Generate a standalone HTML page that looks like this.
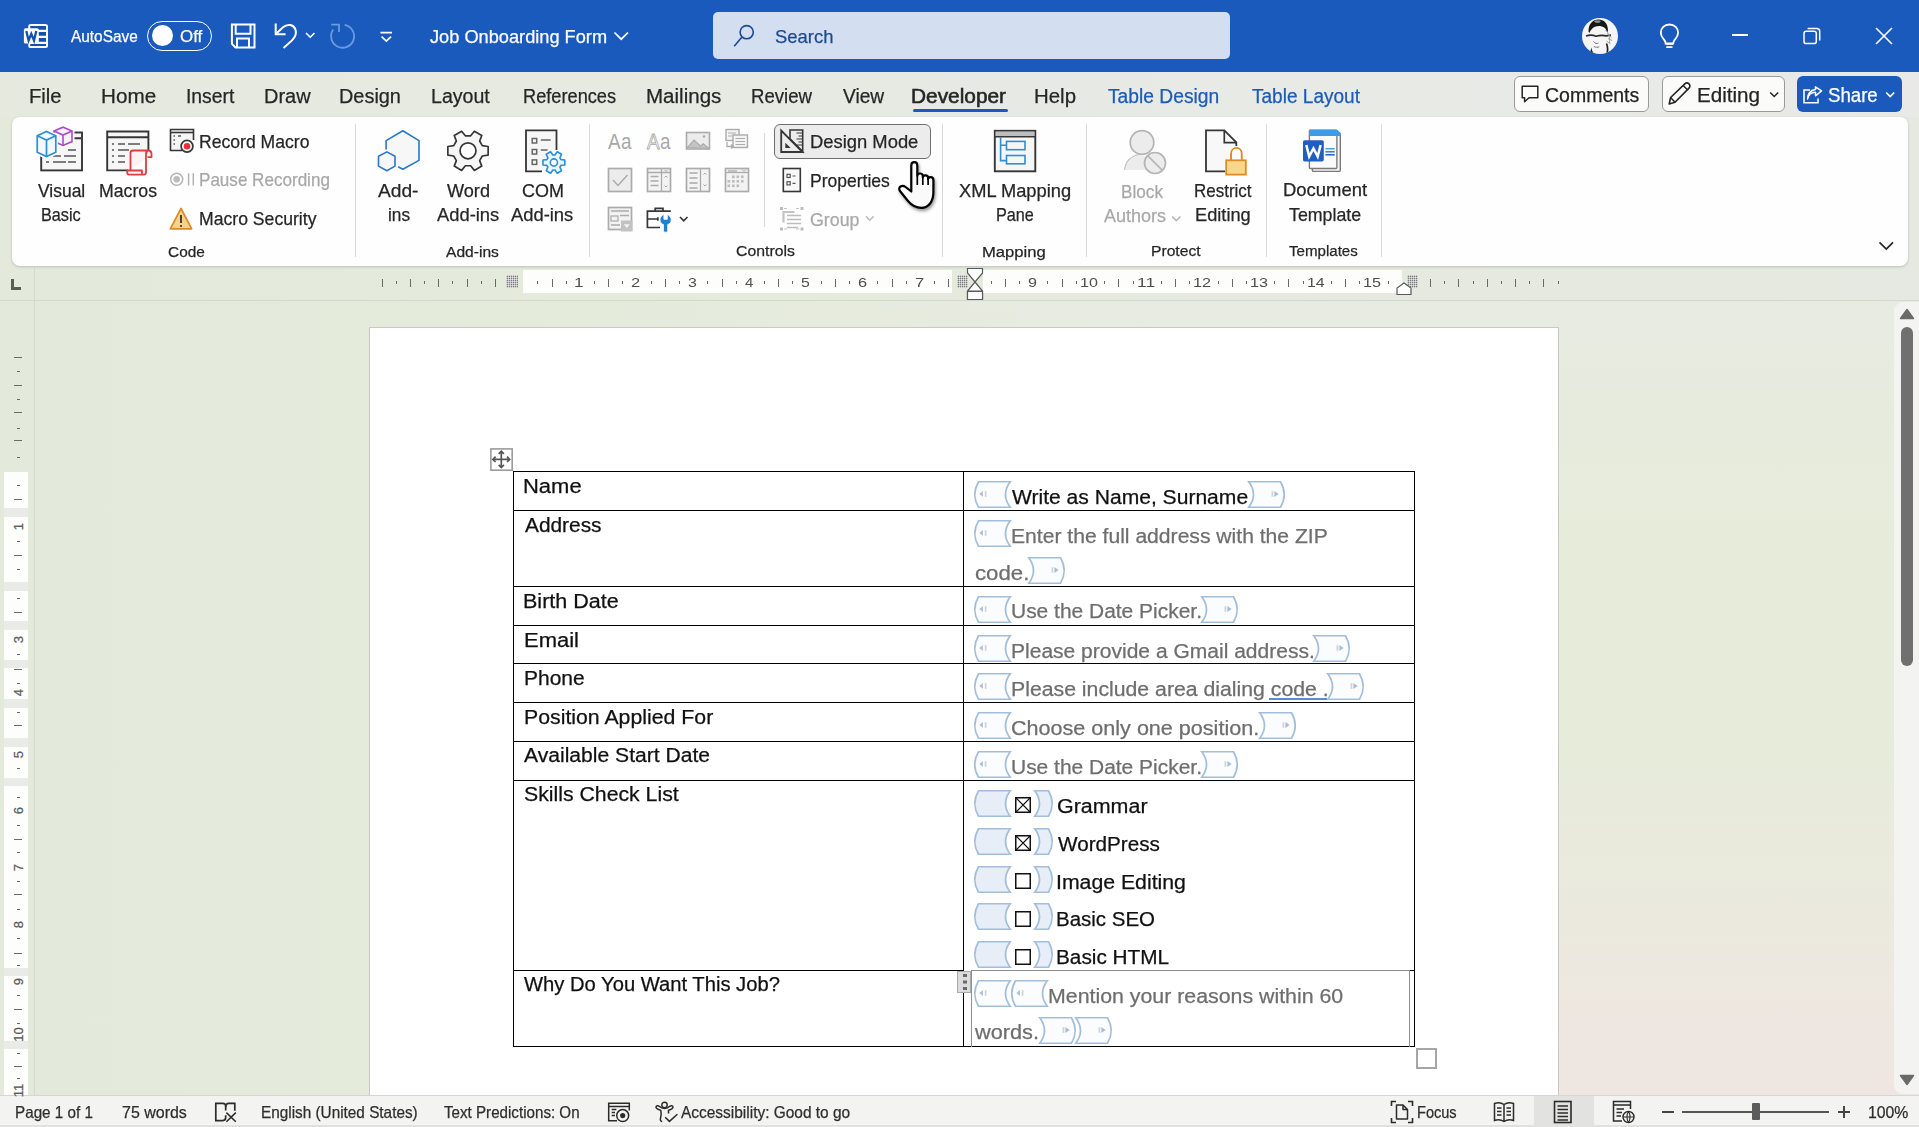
<!DOCTYPE html>
<html><head><meta charset="utf-8"><style>
html,body{margin:0;padding:0}
body{width:1919px;height:1127px;overflow:hidden;position:relative;font-family:"Liberation Sans",sans-serif;background:#e6e9df}
.t{position:absolute;white-space:nowrap;line-height:1;transform-origin:0 0;-webkit-text-stroke:0.25px currentColor}
svg{overflow:visible}
</style></head><body>
<div style="position:absolute;left:0px;top:0px;width:1919px;height:72px;background:#1b5abd"></div>
<div style="position:absolute;left:0px;top:72px;width:1919px;height:45px;background:linear-gradient(90deg,#e5e9de 0%,#e6eae2 40%,#e8eae6 70%,#e9eae8 100%)"></div>
<div style="position:absolute;left:0px;top:117px;width:1919px;height:185px;background:linear-gradient(90deg,#e3eadb 0%,#e4eadc 40%,#e6e9e1 100%)"></div>
<div style="position:absolute;left:0px;top:302px;width:1919px;height:793px;background:linear-gradient(90deg,#e3eadb 0%,#e4ebdb 30%,rgba(0,0,0,0) 60%),linear-gradient(180deg,#e8ebe2 0%,#e7ecda 30%,#e7ecda 55%,#eaeadd 72%,#ede8e0 86%,#efe6e2 100%)"></div>
<div class="t" style="left:70.92px;top:27.85px;font-size:17px;color:#ffffff;transform:scaleX(0.9060);">AutoSave</div>
<div style="position:absolute;left:147px;top:21px;width:65px;height:30px;box-sizing:border-box;border:1.5px solid #fff;border-radius:15px"></div>
<div style="position:absolute;left:152px;top:25px;width:21px;height:21px;background:#fff;border-radius:50%"></div>
<div class="t" style="left:180.24px;top:27.85px;font-size:17px;color:#ffffff;transform:scaleX(0.9965);">Off</div>
<div class="t" style="left:429.73px;top:26.85px;font-size:19px;color:#ffffff;transform:scaleX(0.9582);">Job Onboarding Form</div>
<div style="position:absolute;left:713px;top:12px;width:517px;height:47px;background:#d3def0;border-radius:5px"></div>
<div class="t" style="left:774.87px;top:27.45px;font-size:19px;color:#1d4a91;transform:scaleX(0.9699);">Search</div>
<div class="t" style="left:29.38px;top:86.00px;font-size:20px;color:#262626;transform:scaleX(1.0101);">File</div>
<div class="t" style="left:100.85px;top:86.00px;font-size:20px;color:#262626;transform:scaleX(1.0335);">Home</div>
<div class="t" style="left:185.76px;top:86.00px;font-size:20px;color:#262626;transform:scaleX(0.9667);">Insert</div>
<div class="t" style="left:264.40px;top:86.00px;font-size:20px;color:#262626;transform:scaleX(0.9978);">Draw</div>
<div class="t" style="left:339.41px;top:86.00px;font-size:20px;color:#262626;transform:scaleX(0.9949);">Design</div>
<div class="t" style="left:430.63px;top:86.00px;font-size:20px;color:#262626;transform:scaleX(0.9794);">Layout</div>
<div class="t" style="left:522.54px;top:86.00px;font-size:20px;color:#262626;transform:scaleX(0.9100);">References</div>
<div class="t" style="left:645.86px;top:86.00px;font-size:20px;color:#262626;transform:scaleX(1.0267);">Mailings</div>
<div class="t" style="left:751.01px;top:86.00px;font-size:20px;color:#262626;transform:scaleX(0.9297);">Review</div>
<div class="t" style="left:842.90px;top:86.00px;font-size:20px;color:#262626;transform:scaleX(0.9557);">View</div>
<div class="t" style="left:1033.87px;top:86.00px;font-size:20px;color:#262626;transform:scaleX(1.0207);">Help</div>
<div class="t" style="left:911.33px;top:86.00px;font-size:20px;color:#262626;transform:scaleX(1.0426);-webkit-text-stroke:0.55px #262626;">Developer</div>
<div style="position:absolute;left:913px;top:108.5px;width:95px;height:3.5px;background:#1b5abd;border-radius:2px"></div>
<div class="t" style="left:1107.62px;top:86.00px;font-size:20px;color:#1c5bb8;transform:scaleX(0.9614);">Table Design</div>
<div class="t" style="left:1252.12px;top:86.00px;font-size:20px;color:#1c5bb8;transform:scaleX(0.9522);">Table Layout</div>
<div style="position:absolute;left:1514px;top:76px;width:135px;height:36px;box-sizing:border-box;background:#fbfbfa;border:1px solid #9a9a9a;border-radius:6px"></div>
<div class="t" style="left:1545.03px;top:84.70px;font-size:20px;color:#242424;transform:scaleX(0.9747);">Comments</div>
<div style="position:absolute;left:1661.5px;top:76px;width:123px;height:36px;box-sizing:border-box;background:#fbfbfa;border:1px solid #9a9a9a;border-radius:6px"></div>
<div class="t" style="left:1697.05px;top:84.70px;font-size:20px;color:#242424;transform:scaleX(1.0309);">Editing</div>
<div style="position:absolute;left:1797px;top:76px;width:105px;height:36px;background:#1b5abd;border-radius:6px"></div>
<div class="t" style="left:1827.76px;top:84.70px;font-size:20px;color:#ffffff;transform:scaleX(0.9320);">Share</div>
<div style="position:absolute;left:12px;top:117px;width:1896px;height:149px;background:#fefefe;border-radius:8px;box-shadow:0 1px 3px rgba(0,0,0,0.18)"></div>
<div style="position:absolute;left:355px;top:124px;width:1px;height:133px;background:#d9d9d9"></div>
<div style="position:absolute;left:589px;top:124px;width:1px;height:133px;background:#d9d9d9"></div>
<div style="position:absolute;left:942px;top:124px;width:1px;height:133px;background:#d9d9d9"></div>
<div style="position:absolute;left:1086px;top:124px;width:1px;height:133px;background:#d9d9d9"></div>
<div style="position:absolute;left:1266px;top:124px;width:1px;height:133px;background:#d9d9d9"></div>
<div style="position:absolute;left:1381px;top:124px;width:1px;height:133px;background:#d9d9d9"></div>
<div style="position:absolute;left:764px;top:133px;width:1px;height:94px;background:#d9d9d9"></div>
<div class="t" style="left:37.91px;top:181.97px;font-size:18.5px;color:#262626;transform:scaleX(0.9436);">Visual</div>
<div class="t" style="left:40.70px;top:206.08px;font-size:18.5px;color:#262626;transform:scaleX(0.8778);">Basic</div>
<div class="t" style="left:98.58px;top:181.97px;font-size:18.5px;color:#262626;transform:scaleX(0.9564);">Macros</div>
<div class="t" style="left:199.19px;top:133.08px;font-size:18.5px;color:#262626;transform:scaleX(0.9512);">Record Macro</div>
<div class="t" style="left:199.23px;top:170.78px;font-size:18.5px;color:#a8a8a8;transform:scaleX(0.9223);">Pause Recording</div>
<div class="t" style="left:199.19px;top:210.28px;font-size:18.5px;color:#262626;transform:scaleX(0.9522);">Macro Security</div>
<div class="t" style="left:167.63px;top:243.62px;font-size:15.5px;color:#262626;transform:scaleX(0.9952);">Code</div>
<div class="t" style="left:378.30px;top:182.08px;font-size:18.5px;color:#262626;transform:scaleX(1.0366);">Add-</div>
<div class="t" style="left:387.58px;top:206.28px;font-size:18.5px;color:#262626;transform:scaleX(0.9299);">ins</div>
<div class="t" style="left:446.91px;top:182.08px;font-size:18.5px;color:#262626;transform:scaleX(0.9800);">Word</div>
<div class="t" style="left:437.41px;top:206.28px;font-size:18.5px;color:#262626;transform:scaleX(0.9923);">Add-ins</div>
<div class="t" style="left:521.60px;top:182.08px;font-size:18.5px;color:#262626;transform:scaleX(0.9705);">COM</div>
<div class="t" style="left:511.41px;top:206.28px;font-size:18.5px;color:#262626;transform:scaleX(0.9923);">Add-ins</div>
<div class="t" style="left:445.72px;top:243.52px;font-size:15.5px;color:#262626;transform:scaleX(1.0053);">Add-ins</div>
<div style="position:absolute;left:774px;top:123.5px;width:157px;height:35px;box-sizing:border-box;background:#ececec;border:1px solid #6e6e6e;border-radius:6px"></div>
<div class="t" style="left:809.53px;top:132.97px;font-size:18.5px;color:#262626;transform:scaleX(0.9939);">Design Mode</div>
<div class="t" style="left:809.60px;top:171.68px;font-size:18.5px;color:#262626;transform:scaleX(0.9473);">Properties</div>
<div class="t" style="left:810.11px;top:210.88px;font-size:18.5px;color:#a8a8a8;transform:scaleX(0.9625);">Group</div>
<div class="t" style="left:735.61px;top:243.32px;font-size:15.5px;color:#262626;transform:scaleX(1.0209);">Controls</div>
<div class="t" style="left:958.84px;top:182.18px;font-size:18.5px;color:#262626;transform:scaleX(0.9880);">XML Mapping</div>
<div class="t" style="left:995.70px;top:205.78px;font-size:18.5px;color:#262626;transform:scaleX(0.8756);">Pane</div>
<div class="t" style="left:982.37px;top:243.62px;font-size:15.5px;color:#262626;transform:scaleX(1.0718);">Mapping</div>
<div class="t" style="left:1121.03px;top:183.28px;font-size:18.5px;color:#a8a8a8;transform:scaleX(0.9279);">Block</div>
<div class="t" style="left:1103.91px;top:207.28px;font-size:18.5px;color:#a8a8a8;transform:scaleX(0.9731);">Authors</div>
<svg style="position:absolute;left:1171px;top:215px;" width="11" height="8" viewBox="0 0 11 8" fill="none"><path d="M1.2 1.5L5.3 5.6L9.4 1.5" stroke="#b5b5b5" stroke-width="1.5"/></svg>
<div class="t" style="left:1193.64px;top:181.78px;font-size:18.5px;color:#262626;transform:scaleX(0.9173);">Restrict</div>
<div class="t" style="left:1194.54px;top:205.78px;font-size:18.5px;color:#262626;transform:scaleX(0.9845);">Editing</div>
<div class="t" style="left:1150.55px;top:243.32px;font-size:15.5px;color:#262626;transform:scaleX(1.0096);">Protect</div>
<div class="t" style="left:1282.53px;top:181.28px;font-size:18.5px;color:#262626;transform:scaleX(0.9964);">Document</div>
<div class="t" style="left:1288.64px;top:205.78px;font-size:18.5px;color:#262626;transform:scaleX(0.9619);">Template</div>
<div class="t" style="left:1288.70px;top:243.32px;font-size:15.5px;color:#262626;transform:scaleX(0.9738);">Templates</div>
<div style="position:absolute;left:34px;top:267px;width:1px;height:828px;background:#d4d8cf"></div>
<div style="position:absolute;left:0px;top:300px;width:1919px;height:1px;background:#d4d8cf"></div>
<div style="position:absolute;left:523px;top:270px;width:429px;height:23px;background:#fdfdfb"></div>
<div style="position:absolute;left:983px;top:270px;width:419px;height:23px;background:#fdfdfb"></div>
<div class="t" style="left:574.04px;top:275.95px;font-size:13px;color:#4f4f4f;transform:scaleX(1.3263);-webkit-text-stroke:0;">1</div>
<div class="t" style="left:631.19px;top:275.95px;font-size:13px;color:#4f4f4f;transform:scaleX(1.2680);-webkit-text-stroke:0;">2</div>
<div class="t" style="left:688.05px;top:275.95px;font-size:13px;color:#4f4f4f;transform:scaleX(1.2275);-webkit-text-stroke:0;">3</div>
<div class="t" style="left:745.00px;top:275.95px;font-size:13px;color:#4f4f4f;transform:scaleX(1.1538);-webkit-text-stroke:0;">4</div>
<div class="t" style="left:801.42px;top:275.95px;font-size:13px;color:#4f4f4f;transform:scaleX(1.2146);-webkit-text-stroke:0;">5</div>
<div class="t" style="left:857.91px;top:275.95px;font-size:13px;color:#4f4f4f;transform:scaleX(1.2542);-webkit-text-stroke:0;">6</div>
<div class="t" style="left:914.59px;top:275.95px;font-size:13px;color:#4f4f4f;transform:scaleX(1.2680);-webkit-text-stroke:0;">7</div>
<div class="t" style="left:1028.04px;top:275.95px;font-size:13px;color:#4f4f4f;transform:scaleX(1.2407);-webkit-text-stroke:0;">9</div>
<div class="t" style="left:1079.99px;top:275.95px;font-size:13px;color:#4f4f4f;transform:scaleX(1.2370);-webkit-text-stroke:0;">10</div>
<div class="t" style="left:1136.57px;top:275.95px;font-size:13px;color:#4f4f4f;transform:scaleX(1.3451);-webkit-text-stroke:0;">11</div>
<div class="t" style="left:1193.34px;top:275.95px;font-size:13px;color:#4f4f4f;transform:scaleX(1.2495);-webkit-text-stroke:0;">12</div>
<div class="t" style="left:1250.03px;top:275.95px;font-size:13px;color:#4f4f4f;transform:scaleX(1.2432);-webkit-text-stroke:0;">13</div>
<div class="t" style="left:1306.73px;top:275.95px;font-size:13px;color:#4f4f4f;transform:scaleX(1.2246);-webkit-text-stroke:0;">14</div>
<div class="t" style="left:1363.39px;top:275.95px;font-size:13px;color:#4f4f4f;transform:scaleX(1.2370);-webkit-text-stroke:0;">15</div>
<div style="position:absolute;left:369px;top:327px;width:1190px;height:768px;background:#ffffff;box-sizing:border-box;border:1px solid #c8c8c8;border-bottom:none"></div>
<div style="position:absolute;left:0px;top:1095px;width:1919px;height:32px;background:#f3f3f2;border-top:1px solid #d6d6d6;box-sizing:border-box"></div>
<div style="position:absolute;left:0px;top:1125px;width:1919px;height:2px;background:#e1e1e0"></div>
<div class="t" style="left:14.78px;top:1103.97px;font-size:16.5px;color:#2e2e2e;transform:scaleX(0.9231);">Page 1 of 1</div>
<div class="t" style="left:121.70px;top:1103.97px;font-size:16.5px;color:#2e2e2e;transform:scaleX(0.9682);">75 words</div>
<div class="t" style="left:261.27px;top:1103.97px;font-size:16.5px;color:#2e2e2e;transform:scaleX(0.9285);">English (United States)</div>
<div class="t" style="left:444.20px;top:1103.97px;font-size:16.5px;color:#2e2e2e;transform:scaleX(0.9183);">Text Predictions: On</div>
<div class="t" style="left:680.92px;top:1103.97px;font-size:16.5px;color:#2e2e2e;transform:scaleX(0.9365);">Accessibility: Good to go</div>
<div class="t" style="left:1416.84px;top:1103.97px;font-size:16.5px;color:#2e2e2e;transform:scaleX(0.8824);">Focus</div>
<div style="position:absolute;left:1534px;top:1096px;width:60px;height:31px;background:#e2e2e0"></div>
<div class="t" style="left:1867.62px;top:1103.97px;font-size:16.5px;color:#2e2e2e;transform:scaleX(0.9573);">100%</div>
<div style="position:absolute;left:382px;top:279px;width:1px;height:8px;background:#6a6a6a"></div>
<div style="position:absolute;left:396px;top:281px;width:1px;height:3px;background:#6a6a6a"></div>
<div style="position:absolute;left:410px;top:279px;width:1px;height:8px;background:#6a6a6a"></div>
<div style="position:absolute;left:424px;top:281px;width:1px;height:3px;background:#6a6a6a"></div>
<div style="position:absolute;left:438px;top:279px;width:1px;height:8px;background:#6a6a6a"></div>
<div style="position:absolute;left:452px;top:281px;width:1px;height:3px;background:#6a6a6a"></div>
<div style="position:absolute;left:467px;top:279px;width:1px;height:8px;background:#6a6a6a"></div>
<div style="position:absolute;left:481px;top:281px;width:1px;height:3px;background:#6a6a6a"></div>
<div style="position:absolute;left:495px;top:279px;width:1px;height:8px;background:#6a6a6a"></div>
<div style="position:absolute;left:537px;top:281px;width:1px;height:3px;background:#6a6a6a"></div>
<div style="position:absolute;left:552px;top:279px;width:1px;height:8px;background:#6a6a6a"></div>
<div style="position:absolute;left:566px;top:281px;width:1px;height:3px;background:#6a6a6a"></div>
<div style="position:absolute;left:594px;top:281px;width:1px;height:3px;background:#6a6a6a"></div>
<div style="position:absolute;left:608px;top:279px;width:1px;height:8px;background:#6a6a6a"></div>
<div style="position:absolute;left:622px;top:281px;width:1px;height:3px;background:#6a6a6a"></div>
<div style="position:absolute;left:651px;top:281px;width:1px;height:3px;background:#6a6a6a"></div>
<div style="position:absolute;left:665px;top:279px;width:1px;height:8px;background:#6a6a6a"></div>
<div style="position:absolute;left:679px;top:281px;width:1px;height:3px;background:#6a6a6a"></div>
<div style="position:absolute;left:707px;top:281px;width:1px;height:3px;background:#6a6a6a"></div>
<div style="position:absolute;left:722px;top:279px;width:1px;height:8px;background:#6a6a6a"></div>
<div style="position:absolute;left:736px;top:281px;width:1px;height:3px;background:#6a6a6a"></div>
<div style="position:absolute;left:764px;top:281px;width:1px;height:3px;background:#6a6a6a"></div>
<div style="position:absolute;left:778px;top:279px;width:1px;height:8px;background:#6a6a6a"></div>
<div style="position:absolute;left:792px;top:281px;width:1px;height:3px;background:#6a6a6a"></div>
<div style="position:absolute;left:821px;top:281px;width:1px;height:3px;background:#6a6a6a"></div>
<div style="position:absolute;left:835px;top:279px;width:1px;height:8px;background:#6a6a6a"></div>
<div style="position:absolute;left:849px;top:281px;width:1px;height:3px;background:#6a6a6a"></div>
<div style="position:absolute;left:877px;top:281px;width:1px;height:3px;background:#6a6a6a"></div>
<div style="position:absolute;left:892px;top:279px;width:1px;height:8px;background:#6a6a6a"></div>
<div style="position:absolute;left:906px;top:281px;width:1px;height:3px;background:#6a6a6a"></div>
<div style="position:absolute;left:934px;top:281px;width:1px;height:3px;background:#6a6a6a"></div>
<div style="position:absolute;left:948px;top:279px;width:1px;height:8px;background:#6a6a6a"></div>
<div style="position:absolute;left:991px;top:281px;width:1px;height:3px;background:#6a6a6a"></div>
<div style="position:absolute;left:1005px;top:279px;width:1px;height:8px;background:#6a6a6a"></div>
<div style="position:absolute;left:1019px;top:281px;width:1px;height:3px;background:#6a6a6a"></div>
<div style="position:absolute;left:1047px;top:281px;width:1px;height:3px;background:#6a6a6a"></div>
<div style="position:absolute;left:1062px;top:279px;width:1px;height:8px;background:#6a6a6a"></div>
<div style="position:absolute;left:1076px;top:281px;width:1px;height:3px;background:#6a6a6a"></div>
<div style="position:absolute;left:1104px;top:281px;width:1px;height:3px;background:#6a6a6a"></div>
<div style="position:absolute;left:1118px;top:279px;width:1px;height:8px;background:#6a6a6a"></div>
<div style="position:absolute;left:1133px;top:281px;width:1px;height:3px;background:#6a6a6a"></div>
<div style="position:absolute;left:1161px;top:281px;width:1px;height:3px;background:#6a6a6a"></div>
<div style="position:absolute;left:1175px;top:279px;width:1px;height:8px;background:#6a6a6a"></div>
<div style="position:absolute;left:1189px;top:281px;width:1px;height:3px;background:#6a6a6a"></div>
<div style="position:absolute;left:1218px;top:281px;width:1px;height:3px;background:#6a6a6a"></div>
<div style="position:absolute;left:1232px;top:279px;width:1px;height:8px;background:#6a6a6a"></div>
<div style="position:absolute;left:1246px;top:281px;width:1px;height:3px;background:#6a6a6a"></div>
<div style="position:absolute;left:1274px;top:281px;width:1px;height:3px;background:#6a6a6a"></div>
<div style="position:absolute;left:1288px;top:279px;width:1px;height:8px;background:#6a6a6a"></div>
<div style="position:absolute;left:1303px;top:281px;width:1px;height:3px;background:#6a6a6a"></div>
<div style="position:absolute;left:1331px;top:281px;width:1px;height:3px;background:#6a6a6a"></div>
<div style="position:absolute;left:1345px;top:279px;width:1px;height:8px;background:#6a6a6a"></div>
<div style="position:absolute;left:1359px;top:281px;width:1px;height:3px;background:#6a6a6a"></div>
<div style="position:absolute;left:1388px;top:281px;width:1px;height:3px;background:#6a6a6a"></div>
<div style="position:absolute;left:1430px;top:279px;width:1px;height:8px;background:#6a6a6a"></div>
<div style="position:absolute;left:1444px;top:281px;width:1px;height:3px;background:#6a6a6a"></div>
<div style="position:absolute;left:1458px;top:279px;width:1px;height:8px;background:#6a6a6a"></div>
<div style="position:absolute;left:1473px;top:281px;width:1px;height:3px;background:#6a6a6a"></div>
<div style="position:absolute;left:1487px;top:279px;width:1px;height:8px;background:#6a6a6a"></div>
<div style="position:absolute;left:1501px;top:281px;width:1px;height:3px;background:#6a6a6a"></div>
<div style="position:absolute;left:1515px;top:279px;width:1px;height:8px;background:#6a6a6a"></div>
<div style="position:absolute;left:1529px;top:281px;width:1px;height:3px;background:#6a6a6a"></div>
<div style="position:absolute;left:1543px;top:279px;width:1px;height:8px;background:#6a6a6a"></div>
<div style="position:absolute;left:1558px;top:281px;width:1px;height:3px;background:#6a6a6a"></div>
<div style="position:absolute;left:506px;top:275px;width:12px;height:13px;background:repeating-linear-gradient(90deg,rgba(255,255,255,.55) 0 1px,transparent 1px 2px),repeating-linear-gradient(0deg,rgba(255,255,255,.55) 0 1px,transparent 1px 2px),#7a7a7a"></div>
<div style="position:absolute;left:957px;top:275px;width:11px;height:13px;background:repeating-linear-gradient(90deg,rgba(255,255,255,.55) 0 1px,transparent 1px 2px),repeating-linear-gradient(0deg,rgba(255,255,255,.55) 0 1px,transparent 1px 2px),#7a7a7a"></div>
<div style="position:absolute;left:1407px;top:275px;width:11px;height:13px;background:repeating-linear-gradient(90deg,rgba(255,255,255,.55) 0 1px,transparent 1px 2px),repeating-linear-gradient(0deg,rgba(255,255,255,.55) 0 1px,transparent 1px 2px),#7a7a7a"></div>
<svg style="position:absolute;left:966px;top:267px;" width="18" height="34" viewBox="0 0 18 34" fill="none"><path d="M1.5 1.5H16.5V6L9 15L1.5 6Z M9 15L16.5 24V32.5H1.5V24Z M1.5 24H16.5" stroke="#5a5a5a" stroke-width="1.2" fill="#fff"/><path d="M1.5 24.5H16.5V32.5H1.5Z" fill="#fff" stroke="#5a5a5a" stroke-width="1.2"/></svg>
<svg style="position:absolute;left:1396px;top:282px;" width="16" height="13" viewBox="0 0 16 13" fill="none"><path d="M1 12.5V6L8 1L15 6V12.5Z" fill="#fff" stroke="#5a5a5a" stroke-width="1.2"/></svg>
<svg style="position:absolute;left:11px;top:279px;" width="11" height="11" viewBox="0 0 11 11" fill="none"><path d="M1.5 0V9.5H10" stroke="#585e56" stroke-width="3"/></svg>
<div style="position:absolute;left:4px;top:472px;width:24px;height:623px;background:#fdfdfb"></div>
<div style="position:absolute;left:4px;top:508px;width:24px;height:9px;background:#e9ebe6"></div>
<div style="position:absolute;left:4px;top:582px;width:24px;height:9px;background:#e9ebe6"></div>
<div style="position:absolute;left:4px;top:621px;width:24px;height:9px;background:#e9ebe6"></div>
<div style="position:absolute;left:4px;top:660px;width:24px;height:8px;background:#e9ebe6"></div>
<div style="position:absolute;left:4px;top:699px;width:24px;height:9px;background:#e9ebe6"></div>
<div style="position:absolute;left:4px;top:738px;width:24px;height:9px;background:#e9ebe6"></div>
<div style="position:absolute;left:4px;top:778px;width:24px;height:8px;background:#e9ebe6"></div>
<div style="position:absolute;left:4px;top:968px;width:24px;height:8px;background:#e9ebe6"></div>
<div style="position:absolute;left:4px;top:1041px;width:24px;height:8px;background:#e9ebe6"></div>
<div style="position:absolute;left:14px;top:357px;width:8px;height:1px;background:#6a6a6a"></div>
<div style="position:absolute;left:14px;top:385px;width:8px;height:1px;background:#6a6a6a"></div>
<div style="position:absolute;left:14px;top:412px;width:8px;height:1px;background:#6a6a6a"></div>
<div style="position:absolute;left:14px;top:440px;width:8px;height:1px;background:#6a6a6a"></div>
<div style="position:absolute;left:14px;top:499px;width:8px;height:1px;background:#6a6a6a"></div>
<div style="position:absolute;left:14px;top:555px;width:8px;height:1px;background:#6a6a6a"></div>
<div style="position:absolute;left:14px;top:612px;width:8px;height:1px;background:#6a6a6a"></div>
<div style="position:absolute;left:14px;top:669px;width:8px;height:1px;background:#6a6a6a"></div>
<div style="position:absolute;left:14px;top:725px;width:8px;height:1px;background:#6a6a6a"></div>
<div style="position:absolute;left:14px;top:839px;width:8px;height:1px;background:#6a6a6a"></div>
<div style="position:absolute;left:14px;top:894px;width:8px;height:1px;background:#6a6a6a"></div>
<div style="position:absolute;left:14px;top:953px;width:8px;height:1px;background:#6a6a6a"></div>
<div style="position:absolute;left:14px;top:1009px;width:8px;height:1px;background:#6a6a6a"></div>
<div style="position:absolute;left:14px;top:1066px;width:8px;height:1px;background:#6a6a6a"></div>
<div style="position:absolute;left:17px;top:371px;width:3px;height:1px;background:#6a6a6a"></div>
<div style="position:absolute;left:17px;top:399px;width:3px;height:1px;background:#6a6a6a"></div>
<div style="position:absolute;left:17px;top:428px;width:3px;height:1px;background:#6a6a6a"></div>
<div style="position:absolute;left:17px;top:457px;width:3px;height:1px;background:#6a6a6a"></div>
<div style="position:absolute;left:17px;top:485px;width:3px;height:1px;background:#6a6a6a"></div>
<div style="position:absolute;left:17px;top:541px;width:3px;height:1px;background:#6a6a6a"></div>
<div style="position:absolute;left:17px;top:569px;width:3px;height:1px;background:#6a6a6a"></div>
<div style="position:absolute;left:17px;top:598px;width:3px;height:1px;background:#6a6a6a"></div>
<div style="position:absolute;left:17px;top:654px;width:3px;height:1px;background:#6a6a6a"></div>
<div style="position:absolute;left:17px;top:683px;width:3px;height:1px;background:#6a6a6a"></div>
<div style="position:absolute;left:17px;top:712px;width:3px;height:1px;background:#6a6a6a"></div>
<div style="position:absolute;left:17px;top:768px;width:3px;height:1px;background:#6a6a6a"></div>
<div style="position:absolute;left:17px;top:797px;width:3px;height:1px;background:#6a6a6a"></div>
<div style="position:absolute;left:17px;top:825px;width:3px;height:1px;background:#6a6a6a"></div>
<div style="position:absolute;left:17px;top:852px;width:3px;height:1px;background:#6a6a6a"></div>
<div style="position:absolute;left:17px;top:881px;width:3px;height:1px;background:#6a6a6a"></div>
<div style="position:absolute;left:17px;top:909px;width:3px;height:1px;background:#6a6a6a"></div>
<div style="position:absolute;left:17px;top:938px;width:3px;height:1px;background:#6a6a6a"></div>
<div style="position:absolute;left:17px;top:965px;width:3px;height:1px;background:#6a6a6a"></div>
<div style="position:absolute;left:17px;top:995px;width:3px;height:1px;background:#6a6a6a"></div>
<div style="position:absolute;left:17px;top:1023px;width:3px;height:1px;background:#6a6a6a"></div>
<div style="position:absolute;left:17px;top:1053px;width:3px;height:1px;background:#6a6a6a"></div>
<div style="position:absolute;left:17px;top:1078px;width:3px;height:1px;background:#6a6a6a"></div>
<div class="t" style="left:-2px;top:520.0px;width:40px;text-align:center;font-size:13px;color:#5b5b5b;transform:rotate(-90deg);transform-origin:20px 6.5px">1</div>
<div class="t" style="left:-2px;top:632.7px;width:40px;text-align:center;font-size:13px;color:#5b5b5b;transform:rotate(-90deg);transform-origin:20px 6.5px">3</div>
<div class="t" style="left:-2px;top:685.5px;width:40px;text-align:center;font-size:13px;color:#5b5b5b;transform:rotate(-90deg);transform-origin:20px 6.5px">4</div>
<div class="t" style="left:-2px;top:747.5px;width:40px;text-align:center;font-size:13px;color:#5b5b5b;transform:rotate(-90deg);transform-origin:20px 6.5px">5</div>
<div class="t" style="left:-2px;top:803.5px;width:40px;text-align:center;font-size:13px;color:#5b5b5b;transform:rotate(-90deg);transform-origin:20px 6.5px">6</div>
<div class="t" style="left:-2px;top:861.0px;width:40px;text-align:center;font-size:13px;color:#5b5b5b;transform:rotate(-90deg);transform-origin:20px 6.5px">7</div>
<div class="t" style="left:-2px;top:917.5px;width:40px;text-align:center;font-size:13px;color:#5b5b5b;transform:rotate(-90deg);transform-origin:20px 6.5px">8</div>
<div class="t" style="left:-2px;top:974.9px;width:40px;text-align:center;font-size:13px;color:#5b5b5b;transform:rotate(-90deg);transform-origin:20px 6.5px">9</div>
<div class="t" style="left:-2px;top:1028.1px;width:40px;text-align:center;font-size:13px;color:#5b5b5b;transform:rotate(-90deg);transform-origin:20px 6.5px">10</div>
<div class="t" style="left:-2px;top:1083.5px;width:40px;text-align:center;font-size:13px;color:#5b5b5b;transform:rotate(-90deg);transform-origin:20px 6.5px">11</div>
<div style="position:absolute;left:513px;top:471px;width:902px;height:1px;background:#000"></div>
<div style="position:absolute;left:513px;top:510px;width:902px;height:1px;background:#000"></div>
<div style="position:absolute;left:513px;top:586px;width:902px;height:1px;background:#000"></div>
<div style="position:absolute;left:513px;top:625px;width:902px;height:1px;background:#000"></div>
<div style="position:absolute;left:513px;top:663px;width:902px;height:1px;background:#000"></div>
<div style="position:absolute;left:513px;top:702px;width:902px;height:1px;background:#000"></div>
<div style="position:absolute;left:513px;top:741px;width:902px;height:1px;background:#000"></div>
<div style="position:absolute;left:513px;top:780px;width:902px;height:1px;background:#000"></div>
<div style="position:absolute;left:513px;top:970px;width:451px;height:1px;background:#000"></div>
<div style="position:absolute;left:1410px;top:970px;width:5px;height:1px;background:#000"></div>
<div style="position:absolute;left:513px;top:1046px;width:902px;height:1px;background:#000"></div>
<div style="position:absolute;left:513px;top:471px;width:1px;height:576px;background:#000"></div>
<div style="position:absolute;left:963px;top:471px;width:1px;height:576px;background:#000"></div>
<div style="position:absolute;left:1414px;top:471px;width:1px;height:576px;background:#000"></div>
<div style="position:absolute;left:971px;top:970px;width:439px;height:1px;background:#8f8f8f"></div>
<div style="position:absolute;left:971px;top:970px;width:1px;height:77px;background:#8f8f8f"></div>
<div style="position:absolute;left:1409px;top:970px;width:1px;height:77px;background:#8f8f8f"></div>
<div style="position:absolute;left:1416px;top:1048px;width:21px;height:21px;box-sizing:border-box;border:2px solid #a6a6a6;background:#fff"></div>
<svg style="position:absolute;left:490px;top:448px;" width="23" height="23" viewBox="0 0 23 23" fill="none"><rect x="0.9" y="0.9" width="21.3" height="21.3" fill="#fff" stroke="#9c9c9c" stroke-width="1.6"/><path d="M11.3 3.6V19.2M3.6 11.4H19M8.7 5.9L11.3 3.2L13.9 5.9M8.7 16.9L11.3 19.6L13.9 16.9M5.6 8.7L2.9 11.4L5.6 14M17 8.7L19.7 11.4L17 14" stroke="#555" stroke-width="1.7" stroke-linejoin="miter"/></svg>
<svg style="position:absolute;left:957px;top:971px;" width="14" height="22" viewBox="0 0 14 22" fill="none"><rect x="0.5" y="0.5" width="13" height="21" fill="#dcdcdc" stroke="#a9a9a9"/><rect x="6" y="3" width="4" height="3" fill="#6a6a6a"/><rect x="6" y="9.5" width="4" height="3" fill="#6a6a6a"/><rect x="6" y="16" width="4" height="3" fill="#6a6a6a"/></svg>
<div class="t" style="left:523.24px;top:475.90px;font-size:20px;color:#111111;transform:scaleX(1.0984);">Name</div>
<div class="t" style="left:524.50px;top:514.70px;font-size:20px;color:#111111;transform:scaleX(1.0427);">Address</div>
<div class="t" style="left:523.28px;top:590.60px;font-size:20px;color:#111111;transform:scaleX(1.0764);">Birth Date</div>
<div class="t" style="left:523.64px;top:630.00px;font-size:20px;color:#111111;transform:scaleX(1.0998);">Email</div>
<div class="t" style="left:523.72px;top:668.30px;font-size:20px;color:#111111;transform:scaleX(1.0488);">Phone</div>
<div class="t" style="left:523.70px;top:706.90px;font-size:20px;color:#111111;transform:scaleX(1.0637);">Position Applied For</div>
<div class="t" style="left:524.39px;top:745.40px;font-size:20px;color:#111111;transform:scaleX(1.0547);">Available Start Date</div>
<div class="t" style="left:523.54px;top:784.40px;font-size:20px;color:#111111;transform:scaleX(1.0623);">Skills Check List</div>
<div class="t" style="left:524.15px;top:974.25px;font-size:20px;color:#111111;transform:scaleX(1.0095);">Why Do You Want This Job?</div>
<svg style="position:absolute;left:973.7px;top:480.5px;" width="37" height="27" viewBox="0 0 37 27" fill="none"><path d="M4.5 0.75H36.25Q26.75 13.5 36.25 26.25H4.5Q-3 13.5 4.5 0.75Z" fill="#fbfcfe" stroke="#a3bedb" stroke-width="1.7"/><path d="M5.4 13L8.9 10.1V15.9Z" fill="#aebfd3"/><rect x="10.8" y="10.2" width="1.7" height="5.6" fill="#cfd2d6"/></svg>
<div class="t" style="left:1011.89px;top:486.75px;font-size:20px;color:#111111;transform:scaleX(1.0533);">Write as Name, Surname</div>
<svg style="position:absolute;left:1247.5px;top:480.5px;" width="37" height="27" viewBox="0 0 37 27" fill="none"><path d="M0.75 0.75H32.5Q40 13.5 32.5 26.25H0.75Q10.25 13.5 0.75 0.75Z" fill="#fbfcfe" stroke="#a3bedb" stroke-width="1.7"/><rect x="23.5" y="10.2" width="1.8" height="5.6" fill="#d2d4d8"/><path d="M26.4 10.1V15.9L30.6 13Z" fill="#a6bedb"/></svg>
<svg style="position:absolute;left:973.7px;top:519.5px;" width="37" height="27" viewBox="0 0 37 27" fill="none"><path d="M4.5 0.75H36.25Q26.75 13.5 36.25 26.25H4.5Q-3 13.5 4.5 0.75Z" fill="#fbfcfe" stroke="#a3bedb" stroke-width="1.7"/><path d="M5.4 13L8.9 10.1V15.9Z" fill="#aebfd3"/><rect x="10.8" y="10.2" width="1.7" height="5.6" fill="#cfd2d6"/></svg>
<div class="t" style="left:1010.81px;top:525.90px;font-size:20px;color:#6e6e6e;transform:scaleX(1.0555);">Enter the full address with the ZIP</div>
<div class="t" style="left:974.61px;top:562.90px;font-size:20px;color:#6e6e6e;transform:scaleX(1.1102);">code.</div>
<svg style="position:absolute;left:1027.5px;top:556.5px;" width="37" height="27" viewBox="0 0 37 27" fill="none"><path d="M0.75 0.75H32.5Q40 13.5 32.5 26.25H0.75Q10.25 13.5 0.75 0.75Z" fill="#fbfcfe" stroke="#a3bedb" stroke-width="1.7"/><rect x="23.5" y="10.2" width="1.8" height="5.6" fill="#d2d4d8"/><path d="M26.4 10.1V15.9L30.6 13Z" fill="#a6bedb"/></svg>
<svg style="position:absolute;left:973.7px;top:595.5px;" width="37" height="27" viewBox="0 0 37 27" fill="none"><path d="M4.5 0.75H36.25Q26.75 13.5 36.25 26.25H4.5Q-3 13.5 4.5 0.75Z" fill="#fbfcfe" stroke="#a3bedb" stroke-width="1.7"/><path d="M5.4 13L8.9 10.1V15.9Z" fill="#aebfd3"/><rect x="10.8" y="10.2" width="1.7" height="5.6" fill="#cfd2d6"/></svg>
<div class="t" style="left:1010.93px;top:601.40px;font-size:20px;color:#6e6e6e;transform:scaleX(1.0475);">Use the Date Picker.</div>
<svg style="position:absolute;left:1200.5px;top:595.5px;" width="37" height="27" viewBox="0 0 37 27" fill="none"><path d="M0.75 0.75H32.5Q40 13.5 32.5 26.25H0.75Q10.25 13.5 0.75 0.75Z" fill="#fbfcfe" stroke="#a3bedb" stroke-width="1.7"/><rect x="23.5" y="10.2" width="1.8" height="5.6" fill="#d2d4d8"/><path d="M26.4 10.1V15.9L30.6 13Z" fill="#a6bedb"/></svg>
<svg style="position:absolute;left:973.7px;top:634.5px;" width="37" height="27" viewBox="0 0 37 27" fill="none"><path d="M4.5 0.75H36.25Q26.75 13.5 36.25 26.25H4.5Q-3 13.5 4.5 0.75Z" fill="#fbfcfe" stroke="#a3bedb" stroke-width="1.7"/><path d="M5.4 13L8.9 10.1V15.9Z" fill="#aebfd3"/><rect x="10.8" y="10.2" width="1.7" height="5.6" fill="#cfd2d6"/></svg>
<div class="t" style="left:1010.82px;top:640.50px;font-size:20px;color:#6e6e6e;transform:scaleX(1.0511);">Please provide a Gmail address.</div>
<svg style="position:absolute;left:1313px;top:634.5px;" width="37" height="27" viewBox="0 0 37 27" fill="none"><path d="M0.75 0.75H32.5Q40 13.5 32.5 26.25H0.75Q10.25 13.5 0.75 0.75Z" fill="#fbfcfe" stroke="#a3bedb" stroke-width="1.7"/><rect x="23.5" y="10.2" width="1.8" height="5.6" fill="#d2d4d8"/><path d="M26.4 10.1V15.9L30.6 13Z" fill="#a6bedb"/></svg>
<svg style="position:absolute;left:973.7px;top:672.5px;" width="37" height="27" viewBox="0 0 37 27" fill="none"><path d="M4.5 0.75H36.25Q26.75 13.5 36.25 26.25H4.5Q-3 13.5 4.5 0.75Z" fill="#fbfcfe" stroke="#a3bedb" stroke-width="1.7"/><path d="M5.4 13L8.9 10.1V15.9Z" fill="#aebfd3"/><rect x="10.8" y="10.2" width="1.7" height="5.6" fill="#cfd2d6"/></svg>
<div class="t" style="left:1010.80px;top:678.80px;font-size:20px;color:#6e6e6e;transform:scaleX(1.0622);">Please include area dialing code .</div>
<svg style="position:absolute;left:1327px;top:672.5px;" width="37" height="27" viewBox="0 0 37 27" fill="none"><path d="M0.75 0.75H32.5Q40 13.5 32.5 26.25H0.75Q10.25 13.5 0.75 0.75Z" fill="#fbfcfe" stroke="#a3bedb" stroke-width="1.7"/><rect x="23.5" y="10.2" width="1.8" height="5.6" fill="#d2d4d8"/><path d="M26.4 10.1V15.9L30.6 13Z" fill="#a6bedb"/></svg>
<div style="position:absolute;left:1269px;top:698px;width:58px;height:2px;background:#5f8bc9"></div>
<svg style="position:absolute;left:973.7px;top:711.5px;" width="37" height="27" viewBox="0 0 37 27" fill="none"><path d="M4.5 0.75H36.25Q26.75 13.5 36.25 26.25H4.5Q-3 13.5 4.5 0.75Z" fill="#fbfcfe" stroke="#a3bedb" stroke-width="1.7"/><path d="M5.4 13L8.9 10.1V15.9Z" fill="#aebfd3"/><rect x="10.8" y="10.2" width="1.7" height="5.6" fill="#cfd2d6"/></svg>
<div class="t" style="left:1011.32px;top:717.70px;font-size:20px;color:#6e6e6e;transform:scaleX(1.0783);">Choose only one position.</div>
<svg style="position:absolute;left:1258.5px;top:711.5px;" width="37" height="27" viewBox="0 0 37 27" fill="none"><path d="M0.75 0.75H32.5Q40 13.5 32.5 26.25H0.75Q10.25 13.5 0.75 0.75Z" fill="#fbfcfe" stroke="#a3bedb" stroke-width="1.7"/><rect x="23.5" y="10.2" width="1.8" height="5.6" fill="#d2d4d8"/><path d="M26.4 10.1V15.9L30.6 13Z" fill="#a6bedb"/></svg>
<svg style="position:absolute;left:973.7px;top:750.5px;" width="37" height="27" viewBox="0 0 37 27" fill="none"><path d="M4.5 0.75H36.25Q26.75 13.5 36.25 26.25H4.5Q-3 13.5 4.5 0.75Z" fill="#fbfcfe" stroke="#a3bedb" stroke-width="1.7"/><path d="M5.4 13L8.9 10.1V15.9Z" fill="#aebfd3"/><rect x="10.8" y="10.2" width="1.7" height="5.6" fill="#cfd2d6"/></svg>
<div class="t" style="left:1010.93px;top:756.50px;font-size:20px;color:#6e6e6e;transform:scaleX(1.0475);">Use the Date Picker.</div>
<svg style="position:absolute;left:1201px;top:750.5px;" width="37" height="27" viewBox="0 0 37 27" fill="none"><path d="M0.75 0.75H32.5Q40 13.5 32.5 26.25H0.75Q10.25 13.5 0.75 0.75Z" fill="#fbfcfe" stroke="#a3bedb" stroke-width="1.7"/><rect x="23.5" y="10.2" width="1.8" height="5.6" fill="#d2d4d8"/><path d="M26.4 10.1V15.9L30.6 13Z" fill="#a6bedb"/></svg>
<svg style="position:absolute;left:974.2px;top:790.0px;" width="37" height="27" viewBox="0 0 37 27" fill="none"><path d="M4.5 0.75H36.25Q26.75 13.5 36.25 26.25H4.5Q-3 13.5 4.5 0.75Z" fill="#e7eef8" stroke="#a3bedb" stroke-width="1.7"/></svg>
<svg style="position:absolute;left:1034px;top:790.0px;" width="19" height="27" viewBox="0 0 19 27" fill="none"><path d="M0.75 0.75H14.5Q22 13.5 14.5 26.25H0.75Q10.25 13.5 0.75 0.75Z" fill="#e7eef8" stroke="#a3bedb" stroke-width="1.7"/></svg>
<svg style="position:absolute;left:1015px;top:797.3px;" width="16" height="16" viewBox="0 0 16 16" fill="none"><rect x="0.75" y="0.75" width="14.5" height="14.5" fill="#fff" stroke="#111" stroke-width="1.5"/><path d="M1 1L15 15M15 1L1 15" stroke="#111" stroke-width="1.1"/></svg>
<div class="t" style="left:1056.63px;top:795.90px;font-size:20px;color:#111111;transform:scaleX(1.0722);">Grammar</div>
<svg style="position:absolute;left:974.2px;top:827.8px;" width="37" height="27" viewBox="0 0 37 27" fill="none"><path d="M4.5 0.75H36.25Q26.75 13.5 36.25 26.25H4.5Q-3 13.5 4.5 0.75Z" fill="#e7eef8" stroke="#a3bedb" stroke-width="1.7"/></svg>
<svg style="position:absolute;left:1034px;top:827.8px;" width="19" height="27" viewBox="0 0 19 27" fill="none"><path d="M0.75 0.75H14.5Q22 13.5 14.5 26.25H0.75Q10.25 13.5 0.75 0.75Z" fill="#e7eef8" stroke="#a3bedb" stroke-width="1.7"/></svg>
<svg style="position:absolute;left:1015px;top:835.1px;" width="16" height="16" viewBox="0 0 16 16" fill="none"><rect x="0.75" y="0.75" width="14.5" height="14.5" fill="#fff" stroke="#111" stroke-width="1.5"/><path d="M1 1L15 15M15 1L1 15" stroke="#111" stroke-width="1.1"/></svg>
<div class="t" style="left:1057.60px;top:833.70px;font-size:20px;color:#111111;transform:scaleX(1.0343);">WordPress</div>
<svg style="position:absolute;left:974.2px;top:865.6px;" width="37" height="27" viewBox="0 0 37 27" fill="none"><path d="M4.5 0.75H36.25Q26.75 13.5 36.25 26.25H4.5Q-3 13.5 4.5 0.75Z" fill="#e7eef8" stroke="#a3bedb" stroke-width="1.7"/></svg>
<svg style="position:absolute;left:1034px;top:865.6px;" width="19" height="27" viewBox="0 0 19 27" fill="none"><path d="M0.75 0.75H14.5Q22 13.5 14.5 26.25H0.75Q10.25 13.5 0.75 0.75Z" fill="#e7eef8" stroke="#a3bedb" stroke-width="1.7"/></svg>
<svg style="position:absolute;left:1015px;top:872.9px;" width="16" height="16" viewBox="0 0 16 16" fill="none"><rect x="0.75" y="0.75" width="14.5" height="14.5" fill="#fff" stroke="#111" stroke-width="1.5"/></svg>
<div class="t" style="left:1055.79px;top:871.50px;font-size:20px;color:#111111;transform:scaleX(1.0621);">Image Editing</div>
<svg style="position:absolute;left:974.2px;top:903.4px;" width="37" height="27" viewBox="0 0 37 27" fill="none"><path d="M4.5 0.75H36.25Q26.75 13.5 36.25 26.25H4.5Q-3 13.5 4.5 0.75Z" fill="#e7eef8" stroke="#a3bedb" stroke-width="1.7"/></svg>
<svg style="position:absolute;left:1034px;top:903.4px;" width="19" height="27" viewBox="0 0 19 27" fill="none"><path d="M0.75 0.75H14.5Q22 13.5 14.5 26.25H0.75Q10.25 13.5 0.75 0.75Z" fill="#e7eef8" stroke="#a3bedb" stroke-width="1.7"/></svg>
<svg style="position:absolute;left:1015px;top:910.7px;" width="16" height="16" viewBox="0 0 16 16" fill="none"><rect x="0.75" y="0.75" width="14.5" height="14.5" fill="#fff" stroke="#111" stroke-width="1.5"/></svg>
<div class="t" style="left:1056.06px;top:909.30px;font-size:20px;color:#111111;transform:scaleX(1.0234);">Basic SEO</div>
<svg style="position:absolute;left:974.2px;top:941.2px;" width="37" height="27" viewBox="0 0 37 27" fill="none"><path d="M4.5 0.75H36.25Q26.75 13.5 36.25 26.25H4.5Q-3 13.5 4.5 0.75Z" fill="#e7eef8" stroke="#a3bedb" stroke-width="1.7"/></svg>
<svg style="position:absolute;left:1034px;top:941.2px;" width="19" height="27" viewBox="0 0 19 27" fill="none"><path d="M0.75 0.75H14.5Q22 13.5 14.5 26.25H0.75Q10.25 13.5 0.75 0.75Z" fill="#e7eef8" stroke="#a3bedb" stroke-width="1.7"/></svg>
<svg style="position:absolute;left:1015px;top:948.5px;" width="16" height="16" viewBox="0 0 16 16" fill="none"><rect x="0.75" y="0.75" width="14.5" height="14.5" fill="#fff" stroke="#111" stroke-width="1.5"/></svg>
<div class="t" style="left:1056.04px;top:947.10px;font-size:20px;color:#111111;transform:scaleX(1.0384);">Basic HTML</div>
<svg style="position:absolute;left:974.2px;top:979.5px;" width="37" height="27" viewBox="0 0 37 27" fill="none"><path d="M4.5 0.75H36.25Q26.75 13.5 36.25 26.25H4.5Q-3 13.5 4.5 0.75Z" fill="#fbfcfe" stroke="#a3bedb" stroke-width="1.7"/><path d="M5.4 13L8.9 10.1V15.9Z" fill="#aebfd3"/><rect x="10.8" y="10.2" width="1.7" height="5.6" fill="#cfd2d6"/></svg>
<svg style="position:absolute;left:1010.7px;top:979.5px;" width="37" height="27" viewBox="0 0 37 27" fill="none"><path d="M4.5 0.75H36.25Q26.75 13.5 36.25 26.25H4.5Q-3 13.5 4.5 0.75Z" fill="#fbfcfe" stroke="#a3bedb" stroke-width="1.7"/><path d="M5.4 13L8.9 10.1V15.9Z" fill="#aebfd3"/><rect x="10.8" y="10.2" width="1.7" height="5.6" fill="#cfd2d6"/></svg>
<div class="t" style="left:1048.49px;top:986.00px;font-size:20px;color:#6e6e6e;transform:scaleX(1.0663);">Mention your reasons within 60</div>
<div class="t" style="left:975.40px;top:1022.40px;font-size:20px;color:#6e6e6e;transform:scaleX(1.0858);">words.</div>
<svg style="position:absolute;left:1038.5px;top:1016.5px;" width="37" height="27" viewBox="0 0 37 27" fill="none"><path d="M0.75 0.75H32.5Q40 13.5 32.5 26.25H0.75Q10.25 13.5 0.75 0.75Z" fill="#fbfcfe" stroke="#a3bedb" stroke-width="1.7"/><rect x="23.5" y="10.2" width="1.8" height="5.6" fill="#d2d4d8"/><path d="M26.4 10.1V15.9L30.6 13Z" fill="#a6bedb"/></svg>
<svg style="position:absolute;left:1075px;top:1016.5px;" width="37" height="27" viewBox="0 0 37 27" fill="none"><path d="M0.75 0.75H32.5Q40 13.5 32.5 26.25H0.75Q10.25 13.5 0.75 0.75Z" fill="#fbfcfe" stroke="#a3bedb" stroke-width="1.7"/><rect x="23.5" y="10.2" width="1.8" height="5.6" fill="#d2d4d8"/><path d="M26.4 10.1V15.9L30.6 13Z" fill="#a6bedb"/></svg>
<svg style="position:absolute;left:23px;top:23px;" width="26" height="26" viewBox="0 0 26 26" fill="none"><rect x="6.2" y="1.9" width="17.8" height="22.1" rx="1.5" fill="#1450ad" stroke="#fff" stroke-width="2"/><path d="M7 7.8H24M7 13.85H24M7 19.8H24" stroke="#fff" stroke-width="2.3"/><rect x="0.9" y="5.2" width="14.9" height="15.4" rx="1.5" fill="#fff"/><path d="M3.3 8.1L5.6 17.5L8.3 10.9L11 17.5L13.3 8.1" stroke="#1450ad" stroke-width="2.3" stroke-linejoin="miter"/></svg>
<svg style="position:absolute;left:230px;top:23px;" width="26" height="26" viewBox="0 0 26 26" fill="none"><path d="M1.9 1.5H24.5V24.5H5.5L1.9 20.9Z" stroke="#fff" stroke-width="2"/><path d="M5.7 1.5V10.8H20.5V1.5M7 24.5V15.5H19V24.5" stroke="#fff" stroke-width="2"/></svg>
<svg style="position:absolute;left:274px;top:22px;" width="24" height="28" viewBox="0 0 24 28" fill="none"><path d="M1.7 1.5V12.2H11.6" stroke="#fff" stroke-width="2"/><path d="M1.9 12L9 5.3C13.5 1.5 19.5 2.3 21.4 7.3C23 11.5 21 15.2 18 18.4L9.5 26" stroke="#fff" stroke-width="2"/></svg>
<svg style="position:absolute;left:305px;top:32px;" width="11" height="7" viewBox="0 0 11 7" fill="none"><path d="M1 1L5.25 5.2L9.5 1" stroke="#fff" stroke-width="1.6"/></svg>
<svg style="position:absolute;left:329px;top:22px;" width="28" height="28" viewBox="0 0 28 28" fill="none"><path d="M15.6 2.9A11.5 11.5 0 1 1 4.2 7.6" stroke="#6b9ae0" stroke-width="1.8"/><path d="M2.2 2.6H10V10.1" stroke="#6b9ae0" stroke-width="1.8"/></svg>
<svg style="position:absolute;left:613px;top:31px;" width="17" height="11" viewBox="0 0 17 11" fill="none"><path d="M1.5 1.5L8.2 8.2L15 1.5" stroke="#fff" stroke-width="1.7"/></svg>
<svg style="position:absolute;left:380px;top:31px;" width="13" height="12" viewBox="0 0 13 12" fill="none"><path d="M0.5 1.6H12M1.6 5.6L6.3 10L11 5.6" stroke="#fff" stroke-width="1.7"/></svg>
<svg style="position:absolute;left:732px;top:23px;" width="24" height="26" viewBox="0 0 24 26" fill="none"><circle cx="14.7" cy="9.2" r="6.6" stroke="#1d4a91" stroke-width="1.6"/><path d="M10 14L2.2 23.3" stroke="#1d4a91" stroke-width="1.6"/></svg>
<svg style="position:absolute;left:1581px;top:17px;" width="38" height="38" viewBox="0 0 38 38" fill="none"><defs><clipPath id="av"><circle cx="19" cy="19" r="18"/></clipPath></defs><circle cx="19" cy="19" r="18" fill="#f5f5f5"/><g clip-path="url(#av)"><path d="M7.5 14.5C7.2 7 12 2.6 17.5 2.6C23 2.6 26.8 6 27 13.5L26.2 15.5C25.5 12 23.5 9.6 20 9.2C16 8.8 12.5 9.8 10.2 12.8C9.5 13.8 8.8 15 8.3 16Z" fill="#171717"/><ellipse cx="16.5" cy="4.6" rx="3.2" ry="1.4" fill="#8a8a8a"/><path d="M5 19C8.5 17.8 12 17.9 15 19.2C18.5 18.2 22 18.1 25.5 18.8L30 18" stroke="#2a2a2a" stroke-width="1.7" fill="none"/><path d="M24.5 13.5C27.5 15.5 29.5 20 28.5 26M26 16.5L30.5 20.5M27 21.5L31 23.5M25.5 24L29.5 27" stroke="#9a9a9a" stroke-width="0.9" fill="none"/><path d="M12.5 24.5C14 26.5 16 27 17.5 26M12.8 29.5C14.8 30.5 16.8 30.5 18.3 29.8" stroke="#777" stroke-width="1"/><path d="M10.3 30.5C10.8 33.5 12.3 36.5 15 38.5H8.5Z" fill="#161616"/><path d="M25.5 26.5C27 30 27 34 25.5 38.5" stroke="#222" stroke-width="1.7" fill="none"/></g></svg>
<svg style="position:absolute;left:1659px;top:23px;" width="21" height="27" viewBox="0 0 21 27" fill="none"><path d="M10.4 1.5C5.4 1.5 1.8 5.3 1.8 9.8C1.8 13.2 3.8 15.2 5.2 16.9C6.3 18.2 6.6 19.5 6.6 20.5H14.2C14.2 19.5 14.6 18.2 15.7 16.9C17.1 15.2 19.1 13.2 19.1 9.8C19.1 5.3 15.5 1.5 10.4 1.5Z" stroke="#fff" stroke-width="1.8"/><path d="M6.8 20.8H14M7.3 24.2H13.5" stroke="#fff" stroke-width="1.8"/></svg>
<div style="position:absolute;left:1732px;top:34px;width:16px;height:2px;background:#fff"></div>
<svg style="position:absolute;left:1803px;top:27px;" width="18" height="18" viewBox="0 0 18 18" fill="none"><rect x="1" y="4.3" width="12.3" height="12.3" rx="2.2" stroke="#fff" stroke-width="1.5"/><path d="M4.6 1.4H13.8C15.6 1.4 16.7 2.5 16.7 4.3V13.4" stroke="#fff" stroke-width="1.5"/></svg>
<svg style="position:absolute;left:1875px;top:27px;" width="18" height="18" viewBox="0 0 18 18" fill="none"><path d="M1 1L17 17M17 1L1 17" stroke="#fff" stroke-width="1.6"/></svg>
<svg style="position:absolute;left:1521px;top:85px;" width="18" height="18" viewBox="0 0 18 18" fill="none"><path d="M1.2 1.2H16.8V12.8H8L3.6 16.8V12.8H1.2Z" stroke="#242424" stroke-width="1.5" stroke-linejoin="round"/></svg>
<svg style="position:absolute;left:1667px;top:82px;" width="26" height="24" viewBox="0 0 26 24" fill="none"><path d="M2.2 22L3.6 15.5L17.8 1.8C19 0.7 20.8 0.7 22 1.9C23.2 3.1 23.2 4.9 22 6.1L8 20.3Z" stroke="#242424" stroke-width="1.6" stroke-linejoin="round"/><path d="M16.2 3.5L20.4 7.7M3.6 15.5L8 20.3" stroke="#242424" stroke-width="1.5"/></svg>
<svg style="position:absolute;left:1769px;top:91px;" width="11" height="8" viewBox="0 0 11 8" fill="none"><path d="M1.2 1.5L5.2 5.5L9.2 1.5" stroke="#242424" stroke-width="1.5"/></svg>
<svg style="position:absolute;left:1802px;top:86px;" width="21" height="18" viewBox="0 0 21 18" fill="none"><path d="M8 4H2V16.8H16V12.5" stroke="#fff" stroke-width="1.6"/><path d="M5.5 13C6.5 8.5 9.5 6.3 13.5 6.3V9.8L19.5 4.8L13.5 0.8V3.5C8 4 5.5 8.5 5.5 13Z" stroke="#fff" stroke-width="1.5" stroke-linejoin="round"/></svg>
<svg style="position:absolute;left:1885px;top:91px;" width="11" height="8" viewBox="0 0 11 8" fill="none"><path d="M1.2 1.5L5.2 5.5L9.2 1.5" stroke="#fff" stroke-width="1.6"/></svg>
<svg style="position:absolute;left:36px;top:126px;" width="48" height="46" viewBox="0 0 48 46" fill="none"><rect x="5.2" y="6.5" width="40.8" height="37.9" fill="#f6f6f6" stroke="#363636" stroke-width="1.9"/><path d="M5.2 12.3H46" stroke="#363636" stroke-width="1.9"/><path d="M32 24H40M17 30H25M28 30H40M10 36H13M17 36H30M32 36H40" stroke="#555" stroke-width="1.5"/><path d="M18 5L27 1.2L36 5V15.6L27 19.5L18 15.6Z M1.2 9.7L10.5 5.4L19.8 9.7V26.3L10.5 30.6L1.2 26.3Z" fill="#fff" stroke="#fefefe" stroke-width="5" stroke-linejoin="round"/><path d="M18 5L27 1.2L36 5V15.6L27 19.5L18 15.6Z" fill="#f7f2fb" stroke="#a84fc4" stroke-width="1.6"/><path d="M18 5L27 9L36 5M27 9V19.5" stroke="#a84fc4" stroke-width="1.6"/><path d="M1.2 9.7L10.5 5.4L19.8 9.7V26.3L10.5 30.6L1.2 26.3Z" fill="#fff" stroke="#fefefe" stroke-width="4" stroke-linejoin="round"/><path d="M1.2 9.7L10.5 5.4L19.8 9.7V26.3L10.5 30.6L1.2 26.3Z" fill="#f2f8fd" stroke="#2d8fd5" stroke-width="1.7"/><path d="M1.2 9.7L10.5 14L19.8 9.7M10.5 14V30.6" stroke="#2d8fd5" stroke-width="1.7"/></svg>
<svg style="position:absolute;left:106px;top:130px;" width="48" height="46" viewBox="0 0 48 46" fill="none"><path d="M22 40.4H1.2V1.5H42.4V25" fill="#f6f6f6" stroke="#363636" stroke-width="1.9"/><path d="M1.2 7.3H42.4" stroke="#363636" stroke-width="1.9"/><path d="M6 14H8M12 14H19M22 14H34M6 20H8M12 20H23M6 26H8M12 26H19M6 32H8M12 32H19" stroke="#555" stroke-width="1.5"/><path d="M24.5 40.5V23C24.5 21.5 25.5 20.5 27 20.5H42C44.5 20.5 45.5 22 45.5 24V27.2H41.5M42 20.5C40.5 20.5 40 22 40 24V42.5C40 44 39 44.6 37.8 44.6H23.5C22 44.6 21.2 43.6 21.2 42.5V40.5H36V44.5" fill="#fbf3f3" stroke="#d9403f" stroke-width="1.8" stroke-linejoin="round"/></svg>
<svg style="position:absolute;left:169px;top:128px;" width="26" height="25" viewBox="0 0 26 25" fill="none"><path d="M13 22.5H1.5V1.5H24.5V12" fill="#f6f6f6" stroke="#363636" stroke-width="1.6"/><path d="M1.5 4.5H24.5" stroke="#363636" stroke-width="1.6"/><path d="M4.5 8H6M9 8H12M4.5 12H6M4.5 16H6" stroke="#555" stroke-width="1.3"/><circle cx="18" cy="18.3" r="5.9" fill="#fff" stroke="#363636" stroke-width="1.7"/><circle cx="18" cy="18.3" r="3.3" fill="#e8323a"/></svg>
<svg style="position:absolute;left:169px;top:172px;" width="26" height="16" viewBox="0 0 26 16" fill="none"><circle cx="7.7" cy="7.2" r="6" stroke="#b4b4b4" stroke-width="1.5"/><circle cx="7.7" cy="7.2" r="3.3" fill="#bcbcbc"/><path d="M19.6 1.2V13.5M24.3 1.2V13.5" stroke="#b4b4b4" stroke-width="1.5"/></svg>
<svg style="position:absolute;left:169px;top:207px;" width="24" height="24" viewBox="0 0 24 24" fill="none"><path d="M12 1.5L22.7 21.8H1.3Z" fill="#f6d38c" stroke="#dd8a25" stroke-width="1.7" stroke-linejoin="round"/><path d="M12 8V16" stroke="#333" stroke-width="1.8"/><circle cx="12" cy="19" r="1.1" fill="#333"/></svg>
<svg style="position:absolute;left:370px;top:125px;" width="60" height="55" viewBox="0 0 60 55" fill="none"><path d="M16.1 24.5V15.6L32.8 5.7L49 15.6V35.4L32.8 44.3L28 41.7" fill="#f7f7f7" stroke="#2a78c8" stroke-width="1.6" stroke-linejoin="round"/><path d="M16.9 26.9L25 31.25V41.1L16.9 45.8L8.5 41.1V31.25Z" fill="#f7f7f7" stroke="#2a78c8" stroke-width="1.6" stroke-linejoin="round"/></svg>
<svg style="position:absolute;left:440px;top:125px;" width="56" height="55" viewBox="0 0 56 55" fill="none"><path d="M42.28 20.60L48.15 21.52L48.15 30.08L42.28 31.00L39.64 35.57L41.78 41.11L34.37 45.39L30.64 40.77L25.36 40.77L21.63 45.39L14.22 41.11L16.36 35.57L13.72 31.00L7.85 30.08L7.85 21.52L13.72 20.60L16.36 16.03L14.22 10.49L21.63 6.21L25.36 10.83L30.64 10.83L34.37 6.21L41.78 10.49L39.64 16.03Z" fill="#f6f6f6" stroke="#363636" stroke-width="1.7" stroke-linejoin="round"/><circle cx="28" cy="25.8" r="8" fill="#fff" stroke="#363636" stroke-width="1.7"/></svg>
<svg style="position:absolute;left:524px;top:129px;" width="44" height="46" viewBox="0 0 44 46" fill="none"><path d="M18 42.3H2V1.4H32.5V21" fill="#f6f6f6" stroke="#363636" stroke-width="1.8"/><rect x="8.2" y="9.5" width="4.5" height="4.5" stroke="#666" stroke-width="1.5"/><rect x="8.2" y="20.5" width="4.5" height="4.5" stroke="#666" stroke-width="1.5"/><rect x="8.2" y="30.9" width="4.5" height="4.5" stroke="#666" stroke-width="1.5"/><path d="M16.8 11H26.7M16.8 21H23.5" stroke="#666" stroke-width="1.4"/><path d="M36.95 30.65L40.81 30.98L40.81 36.02L36.95 36.35L35.89 38.18L37.54 41.69L33.17 44.21L30.96 41.03L28.84 41.03L26.63 44.21L22.26 41.69L23.91 38.18L22.85 36.35L18.99 36.02L18.99 30.98L22.85 30.65L23.91 28.82L22.26 25.31L26.63 22.79L28.84 25.97L30.96 25.97L33.17 22.79L37.54 25.31L35.89 28.82Z" fill="#eef5fc" stroke="#2d8fd5" stroke-width="1.6" stroke-linejoin="round"/><circle cx="29.9" cy="33.5" r="3.6" fill="#fff" stroke="#2d8fd5" stroke-width="1.6"/></svg>
<svg style="position:absolute;left:605px;top:128px;" width="30" height="24" viewBox="0 0 30 24" fill="none"><g transform="translate(3 20.5) scale(0.84 1)" font-family="Liberation Sans" font-size="22.5" fill="#a8a8a8"><text x="0" y="0">A</text><text x="15.5" y="0">a</text></g></svg>
<svg style="position:absolute;left:644px;top:128px;" width="30" height="24" viewBox="0 0 30 24" fill="none"><g transform="translate(3 20.5) scale(0.84 1)" font-family="Liberation Sans" font-size="22.5"><text x="0" y="0" fill="#fff" stroke="#a8a8a8" stroke-width="0.9">A</text><text x="15.5" y="0" fill="#a8a8a8">a</text></g></svg>
<svg style="position:absolute;left:685px;top:131px;" width="26" height="20" viewBox="0 0 26 20" fill="none"><rect x="1.5" y="1.5" width="23" height="16.5" fill="#ececec" stroke="#ababab" stroke-width="1.6"/><path d="M2.3 16.5L9 9L15.5 15L18.3 12.8L23.8 17.5Z" fill="#c4c4c4" stroke="#ababab" stroke-width="1.1"/><circle cx="19" cy="5.5" r="1.2" fill="#ababab"/></svg>
<svg style="position:absolute;left:724px;top:128px;" width="26" height="26" viewBox="0 0 26 26" fill="none"><rect x="2" y="1.5" width="13" height="11" fill="#f4f4f4" stroke="#ababab" stroke-width="1.4"/><rect x="9" y="7" width="14.5" height="12.5" fill="#f4f4f4" stroke="#ababab" stroke-width="1.4"/><path d="M4 5H12M4 8H8M11.5 10.5H21M11.5 13.5H21M11.5 16.5H21" stroke="#ababab" stroke-width="1.1"/><path d="M3 14V18.5H9M7 16.5L9.5 18.5L7 20.5" stroke="#ababab" stroke-width="1.3"/></svg>
<svg style="position:absolute;left:607px;top:167px;" width="26" height="26" viewBox="0 0 26 26" fill="none"><rect x="1.5" y="1.5" width="23" height="23" fill="#ececec" stroke="#ababab" stroke-width="1.7"/><path d="M6 13L11 18.5L20.5 8" stroke="#ababab" stroke-width="1.5"/></svg>
<svg style="position:absolute;left:646px;top:167px;" width="26" height="26" viewBox="0 0 26 26" fill="none"><rect x="1.5" y="1.5" width="23" height="23" fill="#f3f3f3" stroke="#ababab" stroke-width="1.7"/><path d="M1.5 5.5H24.5M15.5 1.5V24.5M4.5 9.5H12.5M4.5 14H12.5M4.5 18.5H12.5" stroke="#ababab" stroke-width="1.3"/><path d="M18.5 3L20 4.5L21.5 3M18.5 10.5L20 9L21.5 10.5M18.5 18.5L20 20L21.5 18.5" stroke="#ababab" stroke-width="1"/></svg>
<svg style="position:absolute;left:685px;top:167px;" width="26" height="26" viewBox="0 0 26 26" fill="none"><rect x="1.5" y="1.5" width="23" height="23" fill="#f3f3f3" stroke="#ababab" stroke-width="1.7"/><path d="M15.5 1.5V24.5M4.5 6H12.5M4.5 11H12.5M4.5 16H12.5M4.5 21H12.5" stroke="#ababab" stroke-width="1.3"/><path d="M18.5 7.5L20 6L21.5 7.5M18.5 17.5L20 19L21.5 17.5" stroke="#ababab" stroke-width="1"/></svg>
<svg style="position:absolute;left:724px;top:167px;" width="26" height="26" viewBox="0 0 26 26" fill="none"><rect x="1.5" y="1.5" width="23" height="23" fill="#f3f3f3" stroke="#ababab" stroke-width="1.7"/><path d="M1.5 5.5H24.5" stroke="#ababab" stroke-width="1.3"/><path d="M4 4H13" stroke="#ababab" stroke-width="1.3"/><path d="M18 2.5L20 4.5L22 2.5" stroke="#ababab" stroke-width="1"/><g fill="#bdbdbd"><rect x="8" y="8.5" width="2.6" height="2.6"/><rect x="12.5" y="8.5" width="2.6" height="2.6"/><rect x="17" y="8.5" width="2.6" height="2.6"/><rect x="3.5" y="13" width="2.6" height="2.6"/><rect x="8" y="13" width="2.6" height="2.6"/><rect x="12.5" y="13" width="2.6" height="2.6"/><rect x="17" y="13" width="2.6" height="2.6"/><rect x="3.5" y="17.5" width="2.6" height="2.6"/><rect x="8" y="17.5" width="2.6" height="2.6"/><rect x="12.5" y="17.5" width="2.6" height="2.6"/></g></svg>
<svg style="position:absolute;left:607px;top:206px;" width="26" height="26" viewBox="0 0 26 26" fill="none"><rect x="1.5" y="1.5" width="23" height="22" fill="#f3f3f3" stroke="#ababab" stroke-width="1.7"/><path d="M4 5H22" stroke="#bdbdbd" stroke-width="2.2"/><rect x="4" y="10" width="7" height="5" stroke="#ababab" stroke-width="1.2"/><path d="M13 9.5H22M4 19H13" stroke="#ababab" stroke-width="1.3"/><rect x="14" y="14.5" width="11.5" height="11" fill="#c2c2c2"/><path d="M16.8 18.2H22.8L19.8 22Z" fill="#f4f4f4"/></svg>
<svg style="position:absolute;left:646px;top:207px;" width="28" height="28" viewBox="0 0 28 28" fill="none"><path d="M14 20.5H1.4V4.2H24.8M9.2 4.2V1.4H17V4.2M1.4 12H11.5M11.8 10.3V13.7" stroke="#363636" stroke-width="1.7"/><path d="M17.9 7.6C15.6 8.4 14 10.5 14 12.9C14 15.2 15.5 17 17.5 17.6V23.8C17.5 24.6 18.1 25.2 18.9 25.2H20.3C21.1 25.2 21.7 24.6 21.7 23.8V17.6C23.7 17 25.2 15.2 25.2 12.9C25.2 10.5 23.6 8.4 21.3 7.6V12.3H17.9Z" fill="#1f7fd0" stroke="#fefefe" stroke-width="0.8" stroke-linejoin="round"/></svg>
<svg style="position:absolute;left:679px;top:216px;" width="10" height="7" viewBox="0 0 10 7" fill="none"><path d="M1 1L4.7 4.8L8.5 1" stroke="#333" stroke-width="1.6"/></svg>
<svg style="position:absolute;left:779px;top:128px;" width="26" height="26" viewBox="0 0 26 26" fill="none"><path d="M2.2 2.5V24H23.5Z" stroke="#363636" stroke-width="1.8" stroke-linejoin="miter"/><path d="M7 16.5V19.4H10Z" fill="#363636" stroke="#363636" stroke-width="1.4"/><path d="M11 2V10.8L23.7 23.5V2Z" stroke="#363636" stroke-width="1.6"/><path d="M17.5 5H23.5M19.5 8H23.5M17.5 11H23.5M19.5 14H23.5M17.5 17H23.5" stroke="#363636" stroke-width="1.1"/></svg>
<svg style="position:absolute;left:782px;top:167px;" width="20" height="26" viewBox="0 0 20 26" fill="none"><rect x="1.3" y="1.5" width="17" height="23" fill="#f8f8f8" stroke="#363636" stroke-width="1.6"/><rect x="5" y="7.3" width="3.2" height="3.2" stroke="#555" stroke-width="1.2"/><rect x="5" y="14.7" width="3.2" height="3.2" stroke="#555" stroke-width="1.2"/><path d="M10.5 9H13.5M10.5 16.3H13.5" stroke="#555" stroke-width="1.2"/></svg>
<svg style="position:absolute;left:779px;top:206px;" width="26" height="26" viewBox="0 0 26 26" fill="none"><g fill="#bcbcbc"><rect x="1" y="1" width="3" height="3"/><rect x="21.5" y="1" width="3" height="3"/><rect x="1" y="21.5" width="3" height="3"/><rect x="21.5" y="21.5" width="3" height="3"/></g><path d="M5 2.5H8M17 2.5H20M5 23H8M17 23H20" stroke="#c4c4c4" stroke-width="1"/><path d="M4.5 16.5V6H15.5" stroke="#c4c4c4" stroke-width="2.2"/><path d="M8 9.5H22M8 13.5H22M8 17.5H22M8 21.5H19" stroke="#bcbcbc" stroke-width="1.5"/></svg>
<svg style="position:absolute;left:865px;top:215px;" width="10" height="8" viewBox="0 0 10 8" fill="none"><path d="M1 1.3L4.8 5.2L8.6 1.3" stroke="#bababa" stroke-width="1.5"/></svg>
<svg style="position:absolute;left:993px;top:129px;" width="44" height="44" viewBox="0 0 44 44" fill="none"><rect x="1.8" y="1.8" width="40.5" height="40.5" fill="#f6f6f6" stroke="#363636" stroke-width="1.9"/><rect x="2.6" y="2.6" width="38.8" height="4.9" fill="#bdbdbd"/><path d="M1.8 7.8H42.3" stroke="#363636" stroke-width="1.6"/><path d="M7.6 8.2V31.6H13.5M7.6 16.2H13.5" stroke="#2d8fd5" stroke-width="1.6"/><rect x="13.5" y="12.4" width="18.5" height="8.3" stroke="#2d8fd5" stroke-width="1.6"/><rect x="13.5" y="26.5" width="18.5" height="8.3" stroke="#2d8fd5" stroke-width="1.6"/></svg>
<svg style="position:absolute;left:1124px;top:129px;" width="44" height="47" viewBox="0 0 44 47" fill="none"><circle cx="18" cy="13.5" r="11.8" fill="#ececec" stroke="#b4b4b4" stroke-width="1.7"/><path d="M1 41C1.5 33 7 27 15 26" stroke="#b4b4b4" stroke-width="1.7" fill="none"/><path d="M1 41C1.5 33 7 27 15 26L25 28L22 41Z" fill="#ececec"/><circle cx="31" cy="34" r="10.5" fill="#ececec" stroke="#b4b4b4" stroke-width="1.7"/><path d="M24 27L38 41" stroke="#b4b4b4" stroke-width="1.7"/></svg>
<svg style="position:absolute;left:1204px;top:129px;" width="44" height="47" viewBox="0 0 44 47" fill="none"><path d="M21 42.4H2V1.4H20.3L32.3 13.3V17" fill="#f8f8f8" stroke="#363636" stroke-width="1.8"/><path d="M20.3 1.6V13.6H32.3" stroke="#363636" stroke-width="1.7"/><path d="M27 31.5V25C27 21.3 29.5 18.9 32.4 18.9C35.3 18.9 37.8 21.3 37.8 25V31.5" fill="none" stroke="#fefefe" stroke-width="4"/><path d="M27 31.5V25C27 21.3 29.5 18.9 32.4 18.9C35.3 18.9 37.8 21.3 37.8 25V31.5" fill="none" stroke="#de8b22" stroke-width="1.9"/><rect x="22.2" y="31.3" width="19.6" height="14.3" fill="#f8d78a" stroke="#de8b22" stroke-width="1.8"/></svg>
<svg style="position:absolute;left:1302px;top:129px;" width="40" height="44" viewBox="0 0 40 44" fill="none"><rect x="10.4" y="4" width="27.9" height="38.4" rx="1" fill="#f6f6f6" stroke="#7a7a7a" stroke-width="1.4"/><rect x="7.4" y="1.1" width="27.5" height="38.4" rx="1" fill="#fafafa" stroke="#7a7a7a" stroke-width="1.4"/><path d="M7.1 0.8H35.3L38.6 4V7H7.1Z" fill="#3d9be6"/><rect x="1" y="11.2" width="20.8" height="21.3" rx="1.8" fill="#1f5fbf"/><path d="M4.3 16L7.2 27.6L11.45 19.5L15.7 27.6L18.6 16" stroke="#fff" stroke-width="2.5" stroke-linejoin="miter"/><path d="M23.4 19.75H32.7" stroke="#4aa3e8" stroke-width="1.5"/><path d="M23.4 22.8H32.7" stroke="#2f7ad0" stroke-width="1.5"/><path d="M23.4 25.8H32.7" stroke="#1f5fbf" stroke-width="1.5"/></svg>
<svg style="position:absolute;left:1878px;top:241px;" width="17" height="10" viewBox="0 0 17 10" fill="none"><path d="M1.5 1.3L8.3 8L15 1.3" stroke="#242424" stroke-width="1.7"/></svg>
<svg style="position:absolute;left:880.5px;top:151px;" width="70" height="65" viewBox="0 0 70 65" fill="none"><defs><filter id="sh" x="-30%" y="-30%" width="160%" height="160%"><feDropShadow dx="1.2" dy="2.2" stdDeviation="1.5" flood-color="#000" flood-opacity="0.4"/></filter></defs><path d="M30.3 40.5V14.5C30.3 12.3 31.7 11.2 33.3 11.2C34.9 11.2 36.3 12.3 36.3 14.5V24.8C36.3 23.3 37.5 22.5 39 22.5C40.5 22.5 41.8 23.4 41.8 25V26.3C41.8 25 43 24.3 44.4 24.3C45.9 24.3 47.1 25.2 47.1 26.8V28.3C47.1 27 48.3 26.2 49.6 26.2C51.1 26.2 52.4 27.2 52.4 28.9V41C52.4 50.5 47.5 56.8 40.5 56.8C34.5 56.8 30.5 54.2 27 50L19 40C17.8 38.5 18 36.5 19.5 35.5C21 34.5 23 34.8 24.5 36L30.3 40.5Z" fill="#fafafa" stroke="#000" stroke-width="2.2" stroke-linejoin="round" filter="url(#sh)"/><path d="M36.3 24.8V34M41.8 26.3V34M47.1 28.3V34" stroke="#000" stroke-width="1.7"/></svg>
<svg style="position:absolute;left:214px;top:1102px;" width="24" height="22" viewBox="0 0 24 22" fill="none"><path d="M11.7 8.5V4.3C11.7 2.3 10.8 1.3 8.8 1.3H1.8V18.6H8.8C10.8 18.6 11.7 17.6 11.7 15.6V13.2" stroke="#2b2b2b" stroke-width="1.7"/><path d="M11.7 5C11.7 2.5 12.7 1.3 14.7 1.3H20.8V8.8" stroke="#2b2b2b" stroke-width="1.7"/><path d="M12.4 10.6L21.8 19.8M21.8 10.6L12.4 19.8" stroke="#2b2b2b" stroke-width="1.5"/></svg>
<svg style="position:absolute;left:607px;top:1101px;" width="24" height="24" viewBox="0 0 24 24" fill="none"><path d="M10 19.7H1.7V2.2H22.3V9.5M1.7 5.4H22.3M4.7 8.5H9.4M4.7 11.5H8M4.7 14.6H8" stroke="#2b2b2b" stroke-width="1.5"/><circle cx="15.7" cy="14.6" r="6" fill="#f3f3f2" stroke="#2b2b2b" stroke-width="1.5"/><circle cx="15.7" cy="14.6" r="2.6" fill="#2b2b2b"/></svg>
<svg style="position:absolute;left:654px;top:1100px;" width="26" height="24" viewBox="0 0 26 24" fill="none"><circle cx="10.5" cy="5" r="2.7" stroke="#2b2b2b" stroke-width="1.4"/><path d="M6.8 10.2C4.8 9.6 2 8.6 2 7.2C2 5.6 4 5.3 5.2 6.3C6.6 7.6 8.5 8.4 10.5 8.4C12.5 8.4 14.4 7.6 15.8 6.3C17 5.3 19 5.6 19 7.2C19 8.6 16.5 9.6 14.5 10.2V13.6" stroke="#2b2b2b" stroke-width="1.5" stroke-linejoin="round"/><path d="M6.8 10.2C7.3 12.5 7.3 15 6.6 17.8C6.1 19.8 6.2 21.3 8.2 21.4" stroke="#2b2b2b" stroke-width="1.5"/><path d="M11.2 17.2L15.4 21.4L23.4 14.2" stroke="#2b2b2b" stroke-width="1.5"/></svg>
<svg style="position:absolute;left:1390px;top:1100px;" width="24" height="24" viewBox="0 0 24 24" fill="none"><path d="M1.5 6V1.5H6M18 1.5H22.5V6M22.5 18V22.5H18M6 22.5H1.5V18" stroke="#2b2b2b" stroke-width="1.6"/><path d="M6.5 5H13L17.5 9.5V19H6.5Z M13 5V9.5H17.5" stroke="#2b2b2b" stroke-width="1.5" stroke-linejoin="round"/></svg>
<svg style="position:absolute;left:1493px;top:1101px;" width="22" height="22" viewBox="0 0 22 22" fill="none"><path d="M1.5 2.5C4.5 1.5 8 1.5 11 3.5C14 1.5 17.5 1.5 20.5 2.5V19.5C17.5 18.5 14 18.5 11 20.5C8 18.5 4.5 18.5 1.5 19.5Z M11 3.5V20.5M4 7H8.5M4 10.5H8.5M4 14H8.5M13.5 7H18M13.5 10.5H18M13.5 14H18" stroke="#2b2b2b" stroke-width="1.5"/></svg>
<svg style="position:absolute;left:1553px;top:1100px;" width="20" height="24" viewBox="0 0 20 24" fill="none"><rect x="1.5" y="1.5" width="16.5" height="21" stroke="#2b2b2b" stroke-width="1.6"/><path d="M4.5 6H15M4.5 9.5H15M4.5 13H15M4.5 16.5H15M4.5 20H15" stroke="#2b2b2b" stroke-width="1.4"/></svg>
<svg style="position:absolute;left:1612px;top:1100px;" width="24" height="24" viewBox="0 0 24 24" fill="none"><path d="M10 21H1.5V1.5H18.5V9" stroke="#2b2b2b" stroke-width="1.5"/><path d="M1.5 5H18.5M4.5 9H12M4.5 12.5H10M4.5 16H9" stroke="#2b2b2b" stroke-width="1.3"/><circle cx="16.5" cy="17" r="5.5" fill="#f1f1ef" stroke="#2b2b2b" stroke-width="1.4"/><path d="M11 17H22M16.5 11.5C14.5 14 14.5 20 16.5 22.5M16.5 11.5C18.5 14 18.5 20 16.5 22.5" stroke="#2b2b2b" stroke-width="1.1"/></svg>
<div style="position:absolute;left:1662px;top:1111px;width:12px;height:1.5px;background:#444"></div>
<div style="position:absolute;left:1682px;top:1111px;width:147px;height:1.5px;background:#555"></div>
<div style="position:absolute;left:1752px;top:1103px;width:8px;height:17px;background:#5c5c5c;border-radius:1px"></div>
<div style="position:absolute;left:1838px;top:1111px;width:12px;height:1.5px;background:#444"></div>
<div style="position:absolute;left:1843.2px;top:1105.5px;width:1.5px;height:12px;background:#444"></div>
<div style="position:absolute;left:1894px;top:302px;width:25px;height:792px;background:#f3f3f1;border-radius:9px 0 0 9px"></div>
<svg style="position:absolute;left:1899px;top:308px;" width="16" height="12" viewBox="0 0 16 12" fill="none"><path d="M1.5 10.5L8 1.5L14.5 10.5Z" fill="#6a6a6a" stroke="#6a6a6a" stroke-width="1.5" stroke-linejoin="round"/></svg>
<div style="position:absolute;left:1901px;top:327px;width:12px;height:339px;background:#707070;border-radius:6px"></div>
<svg style="position:absolute;left:1899px;top:1074px;" width="16" height="12" viewBox="0 0 16 12" fill="none"><path d="M1.5 1.5L8 10.5L14.5 1.5Z" fill="#6a6a6a" stroke="#6a6a6a" stroke-width="1.5" stroke-linejoin="round"/></svg>
</body></html>
